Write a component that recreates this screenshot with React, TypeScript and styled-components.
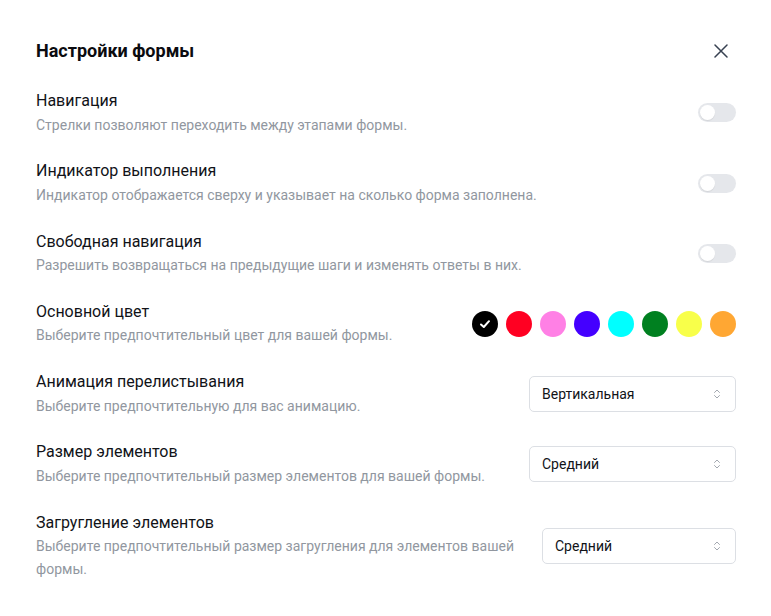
import React from "react";
import styled, { createGlobalStyle } from "styled-components";

const Global = createGlobalStyle`
  html, body { margin: 0; padding: 0; background: #fff; }
  body { font-family: Roboto, "Noto Sans", Arial, sans-serif; -webkit-font-smoothing: antialiased; }
  * { box-sizing: border-box; }
`;

const Panel = styled.div`
  width: 771px;
  padding: 37px 35px 24px 36px;
  display: flex;
  flex-direction: column;
  gap: 24px;
`;

const Header = styled.div`
  display: flex;
  align-items: center;
  justify-content: space-between;
  height: 28px;
`;

const Title = styled.h2`
  margin: 0;
  font-size: 18px;
  line-height: 28px;
  font-weight: 700;
  color: #0b0b0f;
`;

const CloseButton = styled.button`
  border: 0;
  background: transparent;
  padding: 0;
  width: 16px;
  height: 16px;
  margin-right: 7px;
  display: flex;
  align-items: center;
  justify-content: center;
  color: #374151;
  cursor: pointer;
`;

const Rows = styled.div`
  display: flex;
  flex-direction: column;
  gap: 22.8px;
`;

const Row = styled.div`
  display: flex;
  align-items: center;
  justify-content: space-between;
  gap: 24px;
`;

const Text = styled.div`
  display: flex;
  flex-direction: column;
  flex: 1;
  min-width: 0;
`;

const Label = styled.div`
  font-size: 16px;
  line-height: 24px;
  color: #111318;
`;

const Desc = styled.div`
  font-size: 14px;
  line-height: 23px;
  padding-top: 0.5px;
  color: #9197a0;
`;

const Track = styled.div<{ $on?: boolean }>`
  width: 38px;
  height: 19px;
  border-radius: 10px;
  background: ${(p) => (p.$on ? "#111" : "#e5e7eb")};
  padding: 2px;
  display: flex;
  align-items: center;
  flex-shrink: 0;
`;

const Knob = styled.div`
  width: 15px;
  height: 15px;
  border-radius: 50%;
  background: #fff;
  box-shadow: 0 1px 1px rgba(0, 0, 0, 0.08);
`;

const Swatches = styled.div`
  display: flex;
  gap: 8px;
  flex-shrink: 0;
`;

const Swatch = styled.div<{ $color: string }>`
  width: 26px;
  height: 26px;
  border-radius: 50%;
  background: ${(p) => p.$color};
  display: flex;
  align-items: center;
  justify-content: center;
`;

const Select = styled.div<{ $width: number }>`
  width: ${(p) => p.$width}px;
  height: 36px;
  border: 1px solid #dcdfe4;
  border-radius: 5px;
  padding: 0 14px 0 12px;
  display: flex;
  align-items: center;
  justify-content: space-between;
  flex-shrink: 0;
  font-size: 14px;
  color: #111318;
`;

const Toggle = () => (
  <Track>
    <Knob />
  </Track>
);

const Chevrons = () => (
  <svg width="8" height="12" viewBox="0 0 8 12" fill="none" stroke="#a3a8b0" strokeWidth="1" strokeLinecap="round" strokeLinejoin="round">
    <path d="M1.5 4.5 L4 2 L6.5 4.5" />
    <path d="M1.5 7.5 L4 10 L6.5 7.5" />
  </svg>
);

const colors = ["#000000", "#ff0022", "#ff80e5", "#4400ff", "#00ffff", "#008020", "#f8ff4a", "#ffa733"];

export default function App() {
  return (
    <>
      <Global />
      <Panel>
        <Header>
          <Title>Настройки формы</Title>
          <CloseButton aria-label="Закрыть">
            <svg width="14" height="14" viewBox="0 0 14 14" fill="none" stroke="currentColor" strokeWidth="1.5" strokeLinecap="round">
              <path d="M1 1 L13 13 M13 1 L1 13" />
            </svg>
          </CloseButton>
        </Header>
        <Rows>
          <Row>
            <Text>
              <Label>Навигация</Label>
              <Desc>Стрелки позволяют переходить между этапами формы.</Desc>
            </Text>
            <Toggle />
          </Row>
          <Row>
            <Text>
              <Label>Индикатор выполнения</Label>
              <Desc>Индикатор отображается сверху и указывает на сколько форма заполнена.</Desc>
            </Text>
            <Toggle />
          </Row>
          <Row>
            <Text>
              <Label>Свободная навигация</Label>
              <Desc>Разрешить возвращаться на предыдущие шаги и изменять ответы в них.</Desc>
            </Text>
            <Toggle />
          </Row>
          <Row>
            <Text>
              <Label>Основной цвет</Label>
              <Desc>Выберите предпочтительный цвет для вашей формы.</Desc>
            </Text>
            <Swatches>
              {colors.map((c, i) => (
                <Swatch key={c} $color={c}>
                  {i === 0 && (
                    <svg width="12" height="12" viewBox="0 0 12 12" fill="none" stroke="#fff" strokeWidth="2" strokeLinecap="round" strokeLinejoin="round">
                      <path d="M2 6.5 L4.8 9 L10 3.2" />
                    </svg>
                  )}
                </Swatch>
              ))}
            </Swatches>
          </Row>
          <Row>
            <Text>
              <Label>Анимация перелистывания</Label>
              <Desc>Выберите предпочтительную для вас анимацию.</Desc>
            </Text>
            <Select $width={207}>
              <span>Вертикальная</span>
              <Chevrons />
            </Select>
          </Row>
          <Row>
            <Text>
              <Label>Размер элементов</Label>
              <Desc>Выберите предпочтительный размер элементов для вашей формы.</Desc>
            </Text>
            <Select $width={207}>
              <span>Средний</span>
              <Chevrons />
            </Select>
          </Row>
          <Row>
            <Text>
              <Label>Загругление элементов</Label>
              <Desc>Выберите предпочтительный размер загругления для элементов вашей формы.</Desc>
            </Text>
            <Select $width={194}>
              <span>Средний</span>
              <Chevrons />
            </Select>
          </Row>
        </Rows>
      </Panel>
    </>
  );
}
